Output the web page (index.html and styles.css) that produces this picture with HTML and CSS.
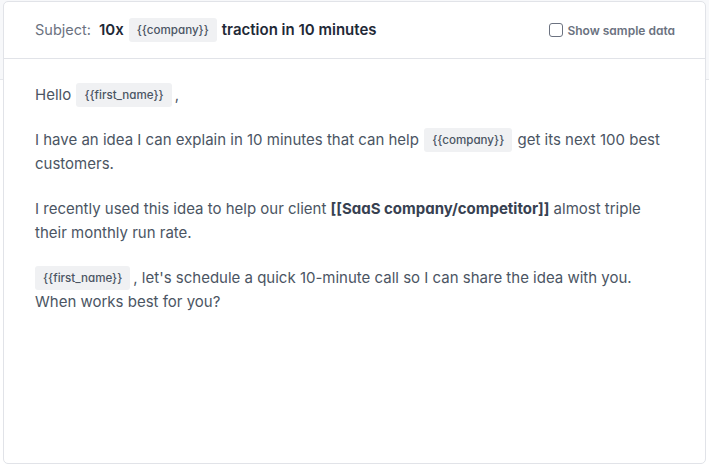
FILE: index.html
```html
<!DOCTYPE html>
<html>
<head>
<meta charset="utf-8">
<link rel="stylesheet" href="styles.css">
</head>
<body>
<div class="card">
  <div class="header">
    <div class="subject">
      <span class="label">Subject:</span>
      <span class="strong">10x</span>
      <span class="chip">{{company}}</span>
      <span class="strong">traction in 10 minutes</span>
    </div>
    <label class="sample">
      <span class="box"></span>
      <span>Show sample data</span>
    </label>
  </div>
  <div class="body">
    <p>Hello <span class="chip tight">{{first_name}}</span>,</p>
    <p>I have an idea I can explain in 10 minutes that can help <span class="chip">{{company}}</span> get its next 100 best customers.</p>
    <p>I recently used this idea to help our client <b class="bold">[[SaaS company/competitor]]</b> almost triple their monthly run rate.</p>
    <p><span class="chip tight first">{{first_name}}</span>, let's schedule a quick 10-minute call so I can share the idea with you. When works best for you?</p>
  </div>
</div>
</body>
</html>
```

FILE: styles.css
```css
html, body {
  margin: 0;
  padding: 0;
}
body {
  font-family: Inter, "Noto Sans", sans-serif;
  background: linear-gradient(#f7f8fa 0, #f7f8fa 79px, #e5e7eb 79px, #e5e7eb 80px, #ffffff 80px);
  height: 466px;
  padding: 1px 3px 2px 3px;
  box-sizing: border-box;
}
.card {
  background: #fff;
  border: 1px solid #e1e3e8;
  border-radius: 5px;
  height: 100%;
  box-sizing: border-box;
}
.header {
  height: 56px;
  border-bottom: 1px solid #e1e3e8;
  display: flex;
  align-items: center;
  justify-content: space-between;
  padding: 0 30px 0 31px;
}
.subject {
  display: flex;
  align-items: center;
  font-size: 14.5px;
  padding-bottom: 1px;
}
.label {
  color: #6b7280;
  margin-right: 8px;
}
.strong {
  color: #1f2937;
  font-weight: 600;
  font-size: 15px;
}
.chip {
  display: inline-block;
  background: #f0f1f3;
  color: #4b5563;
  font-size: 11.6px;
  font-weight: 500;
  line-height: 22px;
  height: 22px;
  padding: 1px 8px;
  border-radius: 3px;
  vertical-align: middle;
  font-feature-settings: "cv11";
}
.subject .chip {
  margin: 0 5px 0 5px;
}
.sample {
  display: flex;
  align-items: center;
  font-size: 12px;
  font-weight: 600;
  color: #6b7280;
  font-feature-settings: "cv11";
}
.box {
  width: 12px;
  height: 12px;
  border: 1px solid #6b7280;
  border-radius: 3px;
  margin-right: 4px;
}
.body {
  padding: 24px 36px 12px 31px;
  color: #4b5563;
  font-size: 15px;
  line-height: 24px;
}
.body p {
  margin: 0 0 21px 0;
}
.body .chip {
  margin: 0 1px;
  vertical-align: 1px;
}
.body .chip.tight {
  margin-right: 3px;
}
.body .chip.first {
  margin-left: 0;
}
.bold {
  font-weight: 700;
  color: #374151;
  font-feature-settings: "cv11";
}
```
